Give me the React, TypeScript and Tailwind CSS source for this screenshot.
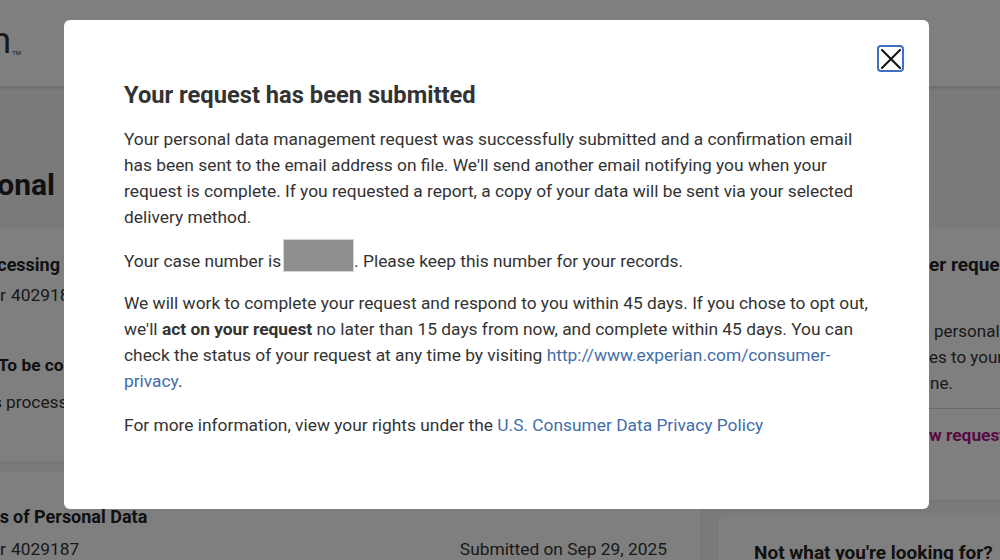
export default function App() {
  return (
    <div className="relative h-[560px] w-[1000px] overflow-hidden bg-[#f4f4f4] text-[#333] [font-family:Roboto,'Liberation_Sans',sans-serif]">
      {/* underlying page */}
      <header className="relative z-10 flex h-[86px] items-center bg-white shadow-[0_2px_3px_rgba(0,0,0,0.12)]">
        <div className="-mt-[4px] flex w-[21px] shrink-0 justify-end">
          <span className="flex items-end whitespace-nowrap text-[36px] leading-none text-[#333]">
            experian<span className="mb-[3px] ml-[1px] text-[6px] leading-none">TM</span>
          </span>
        </div>
      </header>

      <main className="-ml-[300px] w-[1400px] pt-[81px]">
        <div className="flex h-[36px] items-center text-[30px] font-bold leading-[36px] text-[#222]">
          <div className="flex w-[355px] shrink-0 justify-end whitespace-nowrap">Manage Your Personal</div>
          <span className="ml-[8px] whitespace-nowrap">Data Requests</span>
        </div>

        <div className="mt-[25px] flex items-start gap-[18px]">
          {/* left column */}
          <div className="flex w-[1000px] shrink-0 flex-col gap-[10px]">
            <section className="h-[234px] rounded-lg bg-white pl-[34px] pr-[33px] pt-[24px] shadow-[0_1px_2px_rgba(0,0,0,0.08)]">
              <div className="flex text-[18px] font-bold leading-[26px] text-[#222]">
                <div className="flex w-[326px] shrink-0 justify-end whitespace-nowrap">Request Processing</div>
              </div>
              <div className="mt-[4px] flex text-[17.35px] leading-[26px]">
                <div className="flex w-[272px] shrink-0 justify-end whitespace-nowrap">Request number</div>
                <span className="ml-[5px]">4029187</span>
              </div>
              <div className="mt-[44px] flex text-[17.35px] font-bold leading-[26px] text-[#222]">
                <div className="w-[264px] shrink-0" />
                <span className="whitespace-nowrap">To be completed by Nov 13, 2025</span>
              </div>
              <div className="mt-[11px] flex text-[17.35px] leading-[26px]">
                <div className="flex w-[268px] shrink-0 justify-end whitespace-nowrap">Your request is</div>
                <span className="ml-[4px] whitespace-nowrap">processing</span>
              </div>
            </section>

            <section className="h-[200px] rounded-lg bg-white pl-[34px] pr-[33px] pt-[32px] shadow-[0_1px_2px_rgba(0,0,0,0.08)]">
              <div className="flex text-[18px] font-bold leading-[26px] text-[#222]">
                <div className="flex w-[275px] shrink-0 justify-end whitespace-nowrap">Requests</div>
                <span className="ml-[4px] whitespace-nowrap">of Personal Data</span>
              </div>
              <div className="mt-[6px] flex items-center justify-between text-[17.35px] leading-[26px]">
                <div className="flex">
                  <div className="flex w-[272px] shrink-0 justify-end whitespace-nowrap">Request number</div>
                  <span className="ml-[5px]">4029187</span>
                </div>
                <span className="whitespace-nowrap">Submitted on Sep 29, 2025</span>
              </div>
            </section>
          </div>

          {/* right column */}
          <div className="flex w-[340px] shrink-0 flex-col gap-[15px]">
            <section className="h-[272px] rounded-lg bg-white pl-[36px] pt-[24px] shadow-[0_1px_2px_rgba(0,0,0,0.08)]">
              <div className="flex whitespace-nowrap text-[19px] font-bold leading-[26px] text-[#222]">
                <div className="flex w-[175px] shrink-0 justify-end overflow-hidden">Submit anoth</div>
                <span>er request</span>
              </div>
              <div className="mt-[40px] text-[17px] leading-[26px]">
                <div className="flex whitespace-nowrap">
                  <div className="flex w-[175px] shrink-0 justify-end overflow-hidden">To update your</div>
                  <span className="ml-[5px]">personal</span>
                </div>
                <div className="flex whitespace-nowrap">
                  <div className="flex w-[175px] shrink-0 justify-end overflow-hidden">information or make chang</div>
                  <span>es to your</span>
                </div>
                <div className="flex whitespace-nowrap">
                  <div className="flex w-[176px] shrink-0 justify-end overflow-hidden">choices, submit one onli</div>
                  <span>ne.</span>
                </div>
              </div>
              <div className="mt-[12px] border-t border-[#d6d6d6]" />
              <div className="mt-[13px] flex whitespace-nowrap text-[17.35px] font-bold leading-[26px] text-[#af1685]">
                <div className="flex w-[175px] shrink-0 justify-end overflow-hidden">Start a ne</div>
                <span>w request</span>
              </div>
            </section>

            <section className="h-[160px] rounded-lg bg-white pl-[36px] pt-[24px] shadow-[0_1px_2px_rgba(0,0,0,0.08)]">
              <div className="whitespace-nowrap text-[19px] font-bold leading-[28px] text-[#222]">Not what you're looking for?</div>
            </section>
          </div>
        </div>
      </main>

      {/* modal overlay */}
      <div className="fixed inset-0 z-20 bg-black/50">
        <div
          role="dialog"
          className="absolute left-[64px] top-[20px] h-[489px] w-[865px] rounded-md bg-white pl-[60px] pr-[55px] pt-[59px] text-[17.35px] leading-[26px] text-[#333]"
        >
          <button
            aria-label="Close"
            className="absolute right-[25px] top-[25px] flex h-[27px] w-[27px] items-center justify-center rounded-[4px] border-2 border-[#4270c0] bg-white shadow-[0_0_0_1px_#ffffff]"
          >
            <svg width="20" height="20" viewBox="0 0 20 20" fill="none" stroke="#111" strokeWidth="2" strokeLinecap="square">
              <path d="M1 1 L19 19 M19 1 L1 19" />
            </svg>
          </button>

          <h2 className="text-[23.7px] font-bold leading-[32px] text-[#333]">Your request has been submitted</h2>

          <p className="mt-[15px]">
            Your personal data management request was successfully submitted and a confirmation email has been sent to the email address on file. We'll send another email notifying you when your request is complete. If you requested a report, a copy of your data will be sent via your selected delivery method.
          </p>

          <p className="mt-[18px]">
            Your case number is
            <span className="ml-[2px] -mt-[9px] inline-block h-[33px] w-[71px] align-top border border-[#d4d4d4] bg-[#8e8e8e]" />
            . Please keep this number for your records.
          </p>

          <p className="mt-[16px]">
            We will work to complete your request and respond to you within 45 days. If you chose to opt out, we'll{' '}
            <strong className="font-bold">act on your request</strong> no later than 15 days from now, and complete within 45 days. You can check the status of your request at any time by visiting{' '}
            <a href="#" className="text-[#426da9]">
              http://www.experian.com/consumer-privacy
            </a>
            .
          </p>

          <p className="mt-[18px]">
            For more information, view your rights under the{' '}
            <a href="#" className="text-[#426da9]">
              U.S. Consumer Data Privacy Policy
            </a>
          </p>
        </div>
      </div>
    </div>
  );
}
